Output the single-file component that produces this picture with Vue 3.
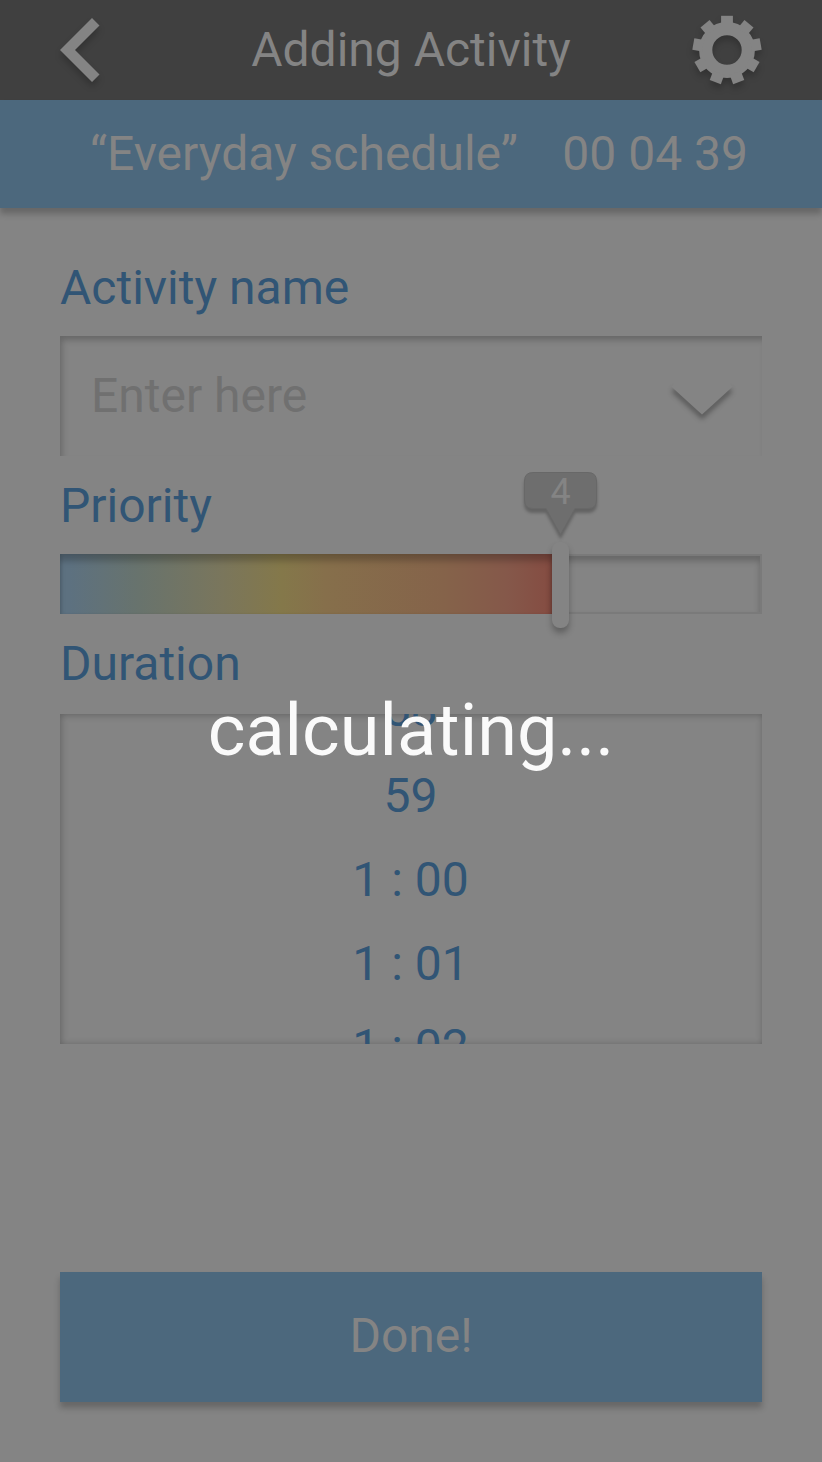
<script setup>
const durations = ['58', '59', '1 : 00', '1 : 01', '1 : 02']
const teeth = [0, 40, 80, 120, 160, 200, 240, 280, 320]
const priority = { value: 4, fill: '492px' }
</script>

<template>
  <div class="screen">
    <header class="topbar">
      <svg class="back" width="40" height="64" viewBox="0 0 40 64">
        <path d="M32 0 L39.5 7.5 L15 32 L39.5 56.5 L32 64 L0 32 Z" />
      </svg>
      <h1 class="title">Adding Activity</h1>
      <svg class="gear" width="70" height="70" viewBox="-35 -35 70 70">
        <circle r="21.3" fill="none" stroke="#848484" stroke-width="13.2" />
        <rect
          v-for="a in teeth"
          :key="a"
          x="-5.9"
          y="-34.2"
          width="11.8"
          height="10"
          :transform="`rotate(${a})`"
        />
      </svg>
    </header>
    <div class="schedule">
      <span class="name">“Everyday schedule”</span>
      <span class="clock">00 04 39</span>
    </div>

    <main class="form">
      <label class="label name-label">Activity name</label>
      <div class="field">
        <span>Enter here</span>
        <svg class="chevron" width="60" height="32" viewBox="0 0 60 32">
          <path class="stroke" d="M1.5 .5 L30 26.5 L58.5 .5" />
          <path class="inside" d="M1.5 -6 V.5 L30 26.5 L58.5 .5 V-6 Z" />
        </svg>
      </div>

      <label class="label priority-label">Priority</label>
      <div class="track">
        <div class="fill" :style="{ width: priority.fill }"></div>
        <div class="knob"></div>
        <div class="bubble">
          <svg width="73" height="66" viewBox="0 0 73 66">
            <path
              d="M9 .5 H64 Q72.5 .5 72.5 9 V28 Q72.5 36.5 64 36.5 H51 L36.5 62.5 L22 36.5 H9 Q.5 36.5 .5 28 V9 Q.5 .5 9 .5 Z"
            />
          </svg>
          <span class="value">{{ priority.value }}</span>
        </div>
      </div>

      <label class="label duration-label">Duration</label>
      <div class="picker">
        <div class="options">
          <div v-for="d in durations" :key="d" class="option">{{ d }}</div>
        </div>
      </div>

      <button class="done">Done!</button>
    </main>

    <div class="overlay">calculating...</div>
  </div>
</template>

<style>
body {
  margin: 0;
  background: #848484;
}
</style>

<style scoped>
.screen {
  position: relative;
  width: 822px;
  height: 1462px;
  overflow: hidden;
  background: #848484;
  color: #848484;
  font: 400 48px/56px Roboto, sans-serif;
  display: flex;
  flex-direction: column;
}
.topbar {
  height: 100px;
  flex: none;
  box-sizing: border-box;
  padding: 0 60px;
  background: #404040;
  display: flex;
  align-items: center;
  justify-content: space-between;
}
.back,
.gear {
  fill: #848484;
  overflow: visible;
  filter: drop-shadow(0 5px 3px rgba(0, 0, 0, 0.2));
}
.title {
  margin: 0 0 0 30px;
  font: inherit;
}
.schedule {
  height: 108px;
  flex: none;
  box-sizing: border-box;
  padding: 0 74px 0 90px;
  background: #4c687d;
  box-shadow: 0 6px 6px rgba(0, 0, 0, 0.22);
  display: flex;
  align-items: center;
  justify-content: space-between;
  white-space: nowrap;
}
.form {
  flex: 1;
  padding: 0 60px;
  display: flex;
  flex-direction: column;
}
.label {
  color: #315575;
}
.name-label {
  margin-top: 52px;
}
.field {
  height: 120px;
  flex: none;
  margin-top: 20px;
  box-sizing: border-box;
  padding: 0 30px 0 31px;
  display: flex;
  align-items: center;
  justify-content: space-between;
  color: #707070;
  box-shadow: inset 3px 5px 6px -1px rgba(0, 0, 0, 0.22);
}
.chevron {
  overflow: visible;
  margin-top: 8px;
}
.chevron .stroke {
  fill: none;
  stroke: #848484;
  stroke-width: 6;
  filter: drop-shadow(0 5px 2.5px rgba(0, 0, 0, 0.32));
}
.chevron .inside {
  fill: #848484;
}
.priority-label {
  margin-top: 22px;
}
.track {
  position: relative;
  height: 60px;
  flex: none;
  margin-top: 20px;
  box-sizing: border-box;
  border: 2px solid #7a7a7a;
  box-shadow: inset 0 5px 6px rgba(0, 0, 0, 0.22);
}
.fill {
  height: 60px;
  margin: -2px 0 0 -2px;
  background: linear-gradient(90deg, #5d7180 2%, #68736d 16%, #7a765c 33%, #84784a 45%, #866f4b 54%, #85634a 78%, #85584a 91%, #854c42 100%);
  box-shadow: inset 0 8px 6px -1px rgba(0, 0, 0, 0.22), inset 2px 0 3px rgba(0, 0, 0, 0.08);
}
.knob {
  position: absolute;
  left: 490px;
  top: -14px;
  width: 17px;
  height: 86px;
  border-radius: 8px;
  background: #848484;
  box-shadow: 0 5px 6px rgba(0, 0, 0, 0.28);
}
.bubble {
  position: absolute;
  left: 462px;
  top: -84px;
  width: 73px;
  height: 66px;
}
.bubble svg {
  display: block;
  overflow: visible;
  fill: #6e6e6e;
  stroke: #686868;
  stroke-width: 1;
  filter: drop-shadow(0 4px 1.5px rgba(0, 0, 0, 0.25));
}
.value {
  position: absolute;
  inset: 0 0 auto;
  text-align: center;
  font-size: 36px;
  line-height: 40px;
}
.duration-label {
  margin-top: 22px;
}
.picker {
  height: 330px;
  flex: none;
  margin-top: 22px;
  overflow: hidden;
  box-shadow: inset 1px 1px 7px rgba(0, 0, 0, 0.26);
}
.options {
  margin: -46px 1px 0 0;
}
.option {
  height: 84px;
  line-height: 84px;
  text-align: center;
  color: #315575;
}
.option:first-child {
  margin-bottom: 2px;
}
.option:last-child {
  margin-top: -1px;
}
.done {
  height: 130px;
  flex: none;
  margin-top: 228px;
  border: 0;
  padding: 0 0 2px;
  background: #4c687d;
  color: #848484;
  font: inherit;
  box-shadow: 0 6px 6px rgba(0, 0, 0, 0.22);
}
.overlay {
  position: absolute;
  inset: 0;
  display: flex;
  align-items: center;
  justify-content: center;
  font-size: 72px;
  line-height: 84px;
  color: #fafafa;
}
</style>
